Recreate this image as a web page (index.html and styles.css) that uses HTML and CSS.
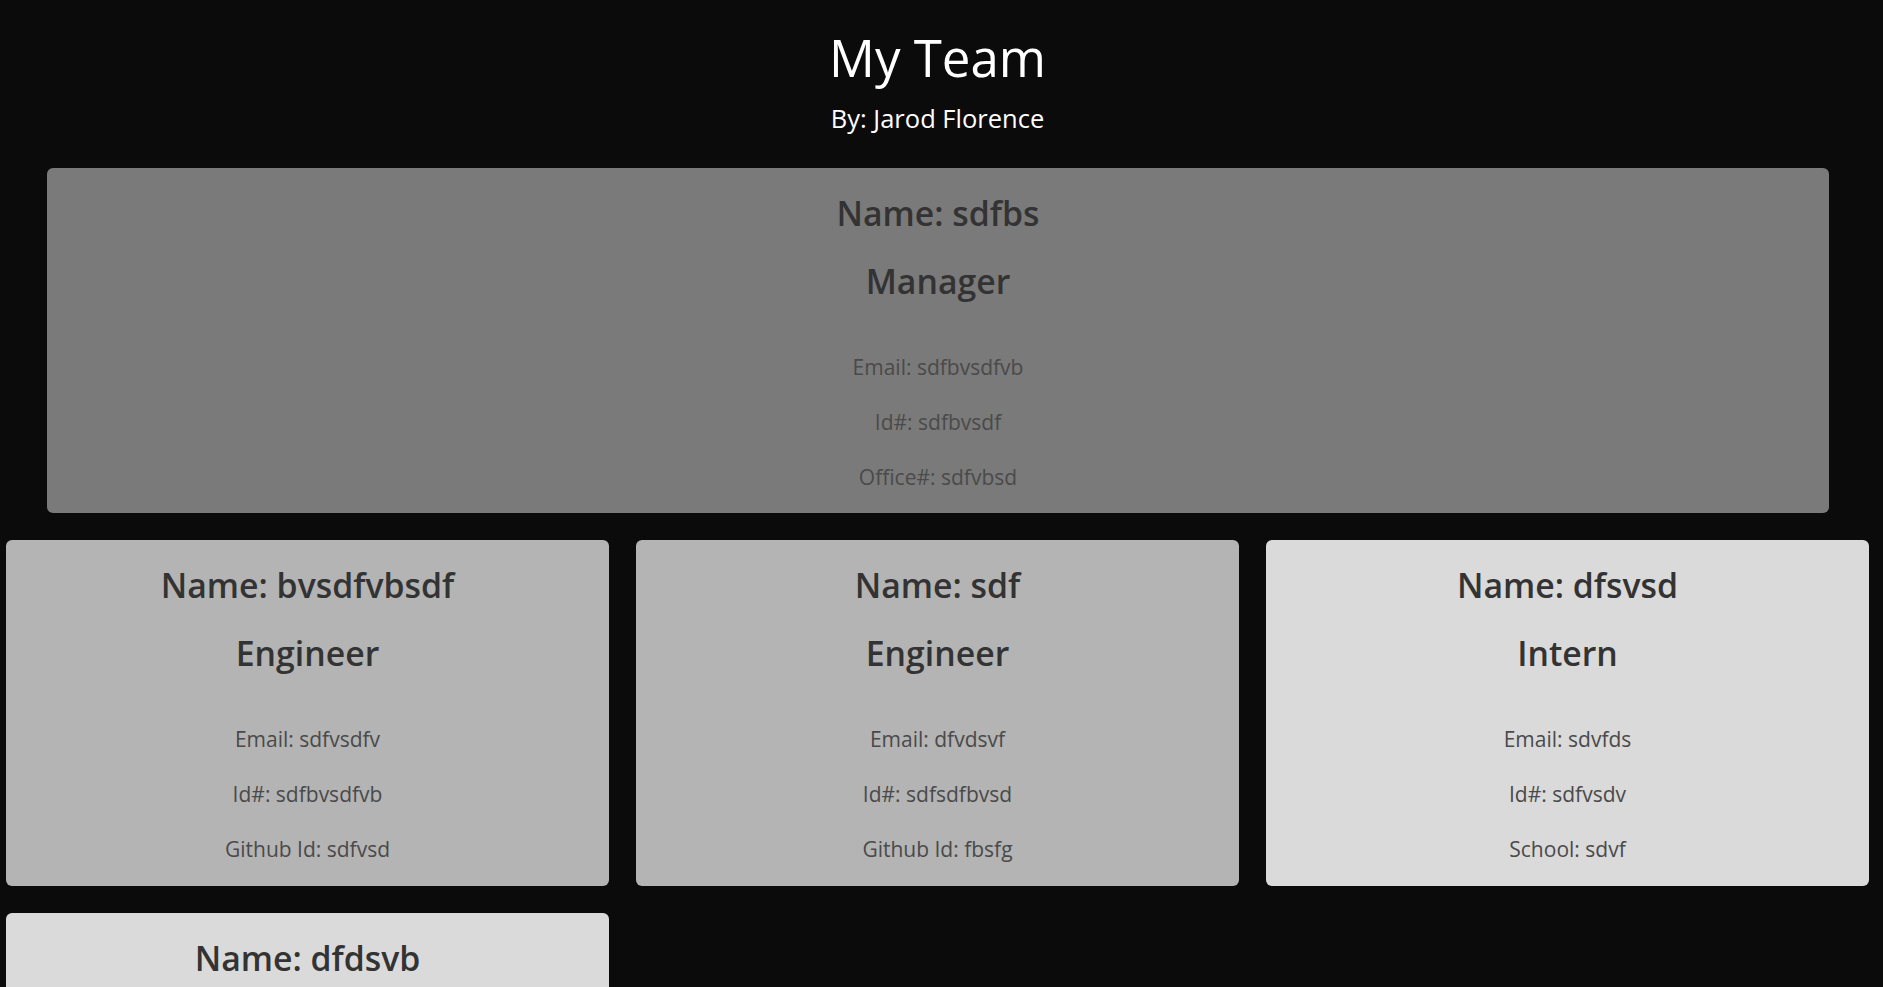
FILE: index.html
```html
<!DOCTYPE html>
<html lang="en">
<head>
<meta charset="utf-8">
<title>My Team</title>
<link rel="stylesheet" href="styles.css">
</head>
<body>
<div class="page">
  <header class="header">
    <h1 class="title">My Team</h1>
    <p class="byline">By: Jarod Florence</p>
  </header>
  <section class="manager-row">
    <div class="card card-manager">
      <h2 class="card-name">Name: sdfbs</h2>
      <h2 class="card-role">Manager</h2>
      <p class="card-line">Email: sdfbvsdfvb</p>
      <p class="card-line">Id#: sdfbvsdf</p>
      <p class="card-line">Office#: sdfvbsd</p>
    </div>
  </section>
  <section class="team-grid">
    <div class="card card-engineer">
      <h2 class="card-name">Name: bvsdfvbsdf</h2>
      <h2 class="card-role">Engineer</h2>
      <p class="card-line">Email: sdfvsdfv</p>
      <p class="card-line">Id#: sdfbvsdfvb</p>
      <p class="card-line">Github Id: sdfvsd</p>
    </div>
    <div class="card card-engineer">
      <h2 class="card-name">Name: sdf</h2>
      <h2 class="card-role">Engineer</h2>
      <p class="card-line">Email: dfvdsvf</p>
      <p class="card-line">Id#: sdfsdfbvsd</p>
      <p class="card-line">Github Id: fbsfg</p>
    </div>
    <div class="card card-intern">
      <h2 class="card-name">Name: dfsvsd</h2>
      <h2 class="card-role">Intern</h2>
      <p class="card-line">Email: sdvfds</p>
      <p class="card-line">Id#: sdfvsdv</p>
      <p class="card-line">School: sdvf</p>
    </div>
    <div class="card card-intern">
      <h2 class="card-name">Name: dfdsvb</h2>
      <h2 class="card-role">Intern</h2>
      <p class="card-line">Email: dfdsvb</p>
      <p class="card-line">Id#: dfdsvb</p>
      <p class="card-line">School: dfdsvb</p>
    </div>
  </section>
</div>
</body>
</html>
```
FILE: styles.css
```css
html, body {
  margin: 0;
  padding: 0;
  background: #0b0b0b;
}
body {
  font-family: "Open Sans", "Noto Sans", "Liberation Sans", sans-serif;
  color: #333;
}
.page {
  width: 1875px;
  padding-bottom: 40px;
}
.header {
  text-align: center;
  padding-top: 22px;
  color: #fff;
}
.title {
  margin: 0;
  font-size: 51px;
  font-weight: 400;
  line-height: 70px;
}
.byline {
  margin: 11px 0 0;
  font-size: 25.5px;
  line-height: 30px;
}
.manager-row {
  margin-top: 35px;
  padding-left: 47px;
}
.card {
  box-sizing: border-box;
  border-radius: 6px;
  text-align: center;
  padding-top: 23px;
}
.card-manager {
  width: 1782px;
  height: 345px;
  background: #7a7a7a;
}
.team-grid {
  display: grid;
  grid-template-columns: repeat(3, 603px);
  column-gap: 27px;
  row-gap: 27px;
  padding-left: 6px;
  margin-top: 27px;
}
.team-grid .card {
  height: 346px;
}
.card-engineer {
  background: #b4b4b4;
}
.card-intern {
  background: #dadada;
}
.card-name, .card-role {
  margin: 0;
  font-size: 33.8px;
  font-weight: 600;
  line-height: 44px;
  color: #333;
}
.card-role {
  margin-top: 24px;
  margin-bottom: 49px;
}
.card-line {
  margin: 0 0 25px;
  font-size: 21px;
  line-height: 30px;
  color: #4a4a4a;
}
```
